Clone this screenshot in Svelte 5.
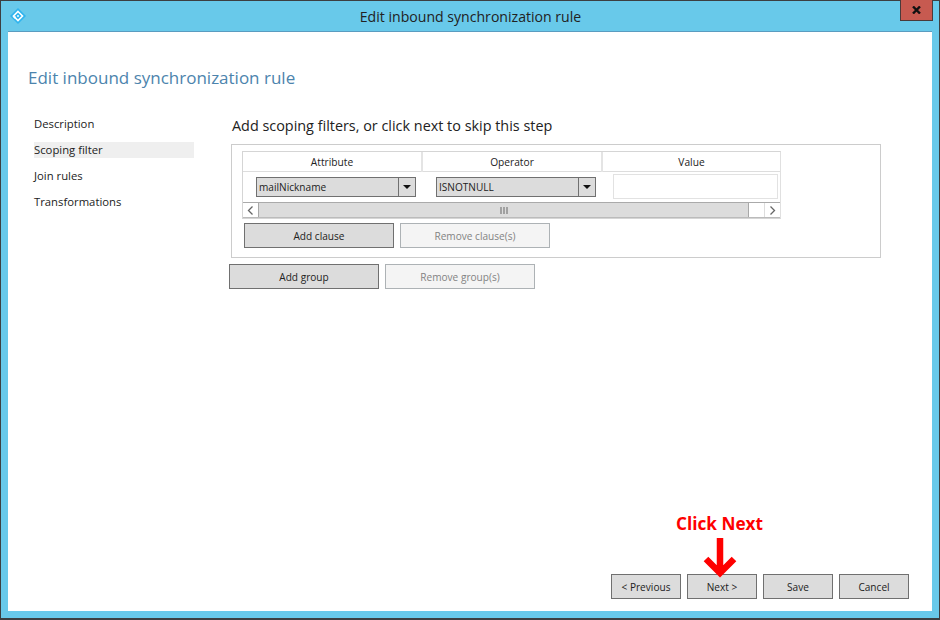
<script>
    let steps = ['Description', 'Scoping filter', 'Join rules', 'Transformations'];
    let current = 'Scoping filter';
</script>

<div class="window">
    <header class="titlebar">
        <svg class="logo" width="18" height="18" viewBox="0 0 18 18">
            <path d="M9 1 L17 9 L9 17 L1 9 Z" fill="#2fb4ee" />
            <path d="M9 4.5 L13.5 9 L9 13.5 L4.5 9 Z" fill="none" stroke="#fff" stroke-width="1.6" />
            <path d="M3.5 9.5 L7 9.5 L6 12 Z" fill="#fff" />
            <rect x="8" y="8" width="2" height="2" fill="#bfeaff" />
        </svg>
        <span class="title">Edit inbound synchronization rule</span>
        <button class="close" aria-label="Close">
            <svg width="9" height="8" viewBox="0 0 9 8">
                <path d="M1 .5 L8 7.5 M8 .5 L1 7.5" stroke="#111" stroke-width="2.4" fill="none" />
            </svg>
        </button>
    </header>

    <div class="content">
        <h1>Edit inbound synchronization rule</h1>

        <div class="columns">
            <nav>
                {#each steps as step}
                    <div class="step" class:active={step === current}>{step}</div>
                {/each}
            </nav>

            <main>
                <h2>Add scoping filters, or click next to skip this step</h2>

                <div class="group">
                    <div class="table">
                        <div class="thead">
                            <div class="th">Attribute</div>
                            <div class="th">Operator</div>
                            <div class="th last">Value</div>
                        </div>
                        <div class="tr">
                            <div class="combo">
                                <span class="combo-text">mailNickname</span>
                                <span class="combo-btn"><i></i></span>
                            </div>
                            <div class="combo">
                                <span class="combo-text">ISNOTNULL</span>
                                <span class="combo-btn"><i></i></span>
                            </div>
                            <div class="value"></div>
                        </div>
                        <div class="scroll">
                            <span class="arrow">
                                <svg width="7" height="9" viewBox="0 0 7 9"><path d="M5.5 .5 L1.5 4.5 L5.5 8.5" fill="none" stroke="#666" stroke-width="1.3" /></svg>
                            </span>
                            <span class="thumb">
                                <svg width="8" height="7" viewBox="0 0 8 7"><path d="M1 0V7M4 0V7M7 0V7" stroke="#666" stroke-width="1" /></svg>
                            </span>
                            <span class="gap"></span>
                            <span class="arrow">
                                <svg width="7" height="9" viewBox="0 0 7 9"><path d="M1.5 .5 L5.5 4.5 L1.5 8.5" fill="none" stroke="#666" stroke-width="1.3" /></svg>
                            </span>
                        </div>
                    </div>
                    <div class="btn-row clause-row">
                        <button class="btn wide">Add clause</button>
                        <button class="btn wide off">Remove clause(s)</button>
                    </div>
                </div>

                <div class="btn-row group-row">
                    <button class="btn wide">Add group</button>
                    <button class="btn wide off">Remove group(s)</button>
                </div>
            </main>
        </div>

        <footer>
            <button class="btn">&lt; Previous</button>
            <button class="btn">Next &gt;</button>
            <button class="btn">Save</button>
            <button class="btn">Cancel</button>
        </footer>

        <div class="callout">
            <span>Click Next</span>
            <svg width="36" height="40" viewBox="0 0 36 40">
                <path d="M18 0 V34 M4 21 L18 35 L32 21" fill="none" stroke="#fe0000" stroke-width="6.5" />
            </svg>
        </div>
    </div>
</div>

<style>
    :global(body) {
        margin: 0;
        background: #fff;
    }

    .window {
        width: 940px;
        height: 620px;
        box-sizing: border-box;
        display: flex;
        flex-direction: column;
        background: #68c9ea;
        border: 1px solid #3c3f41;
        border-bottom-width: 2px;
        padding: 0 7px 7px;
        font-family: "Open Sans", "Noto Sans", sans-serif;
        color: #222;
    }

    .titlebar {
        height: 30px;
        flex: none;
        position: relative;
        display: flex;
        justify-content: center;
        align-items: center;
    }

    .logo {
        position: absolute;
        left: 1px;
        top: 6px;
    }

    .title {
        font-size: 14.1px;
        margin-top: 1px;
        margin-left: 1px;
    }

    .close {
        position: absolute;
        right: -1px;
        top: -1px;
        width: 33px;
        height: 21px;
        padding: 0;
        background: #c75a50;
        border: 1px solid #4a3a3a;
        border-top: none;
        display: flex;
        align-items: center;
        justify-content: center;
    }

    .content {
        flex: 1;
        position: relative;
        background: #fff;
        border-top: 1px solid #5a9cc0;
        display: flex;
        flex-direction: column;
    }

    h1 {
        margin: 34px 0 0 20px;
        font-size: 17px;
        line-height: 24px;
        font-weight: 400;
        color: #4c84ad;
    }

    .columns {
        display: flex;
        margin-top: 26px;
    }

    nav {
        width: 160px;
        margin-left: 26px;
        flex: none;
    }

    .step {
        height: 16px;
        line-height: 16px;
        font-size: 11.3px;
        margin-bottom: 10px;
    }

    .step.active {
        background: #efefef;
    }

    main {
        margin-left: 35px;
        flex: 1;
    }

    h2 {
        margin: 0 0 0 3px;
        font-size: 14.4px;
        line-height: 20px;
        font-weight: 400;
    }

    .group {
        box-sizing: border-box;
        width: 650px;
        height: 114px;
        margin: 8px 0 0 2px;
        border: 1px solid #ccc;
        padding: 6px 0 0 10px;
    }

    .table {
        box-sizing: border-box;
        width: 539px;
        height: 68px;
        border: 1px solid #d5d5d5;
        border-right-color: #e0e0e0;
    }

    .thead {
        display: grid;
        grid-template-columns: 180px 180px 1fr;
        height: 20px;
        border-bottom: 1px solid #ddd;
        box-sizing: border-box;
    }

    .th {
        font-size: 10.2px;
        line-height: 20px;
        text-align: center;
        border-right: 2px solid #e4e4e4;
    }

    .th.last {
        border-right: none;
    }

    .tr {
        display: flex;
        height: 30px;
        align-items: flex-start;
        padding-left: 13px;
    }

    .combo {
        box-sizing: border-box;
        width: 160px;
        height: 20px;
        margin: 5px 20px 0 0;
        display: flex;
        background: #dcdcdc;
        border: 1px solid #707070;
        font-size: 10.1px;
        line-height: 18px;
    }

    .combo-text {
        flex: 1;
        padding-left: 2px;
    }

    .combo-btn {
        width: 16px;
        border-left: 1px solid #707070;
        display: flex;
        align-items: center;
        justify-content: center;
    }

    .combo-btn i {
        width: 0;
        height: 0;
        border: 4px solid transparent;
        border-top: 4px solid #111;
        border-bottom: none;
    }

    .value {
        box-sizing: border-box;
        width: 165px;
        height: 25px;
        margin: 2px 0 0 -3px;
        border: 1px solid #e2e2e2;
    }

    .scroll {
        box-sizing: border-box;
        display: flex;
        height: 16px;
        border-top: 1px solid #aaa;
        border-bottom: 1px solid #bbb;
    }

    .arrow {
        width: 15px;
        display: flex;
        align-items: center;
        justify-content: center;
    }

    .thumb {
        box-sizing: border-box;
        width: 491px;
        background: #dcdcdc;
        border: 1px solid #a8a8a8;
        border-top: none;
        border-bottom: none;
        display: flex;
        align-items: center;
        justify-content: center;
    }

    .gap {
        flex: 1;
        border-right: 1px solid #ddd;
    }

    .btn {
        box-sizing: border-box;
        width: 70px;
        height: 25px;
        padding: 0;
        background: #dcdcdc;
        border: 1px solid #707070;
        font-family: inherit;
        font-size: 10.1px;
        color: #222;
    }

    .btn.wide {
        width: 150px;
    }

    .btn.off {
        background: #f4f4f4;
        border-color: #adb2b5;
        color: #838383;
    }

    .btn-row {
        display: flex;
        gap: 6px;
    }

    .clause-row {
        margin: 4px 0 0 2px;
    }

    .group-row {
        margin-top: 6px;
    }

    footer {
        margin-top: auto;
        margin-bottom: 12px;
        margin-right: 23px;
        display: flex;
        justify-content: flex-end;
        gap: 6px;
    }

    .callout {
        position: absolute;
        left: 621px;
        top: 480px;
        width: 181px;
        display: flex;
        flex-direction: column;
        align-items: center;
        color: #fe0000;
        font-size: 17.2px;
        line-height: 24px;
        font-weight: 700;
        gap: 2px;
    }
</style>
